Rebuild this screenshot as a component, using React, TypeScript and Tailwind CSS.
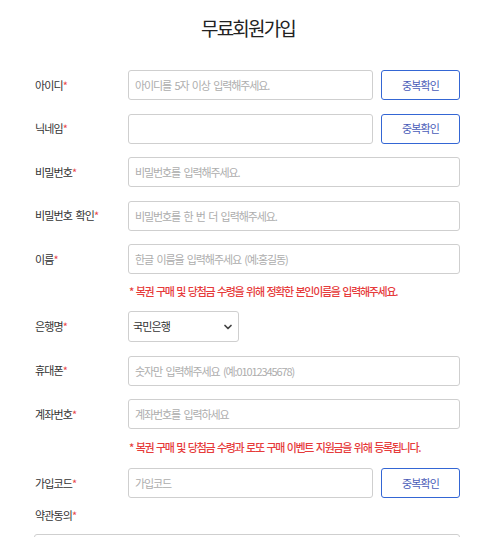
import { ChevronDown } from "lucide-react";

const FONT = "font-['Noto_Sans_CJK_KR','Noto_Sans',sans-serif]";

function Label({ text }: { text: string }) {
  return (
    <label className="w-[93px] shrink-0 text-[11px] tracking-[-0.9px] text-[#333] [word-spacing:2px]">
      {text}
      <span className="text-[#e8474a]">*</span>
    </label>
  );
}

function TextInput({ placeholder }: { placeholder?: string }) {
  return (
    <input
      className="h-[30px] min-w-0 flex-1 rounded-[3px] border border-[#cfcfcf] bg-white px-[6px] text-[11px] tracking-[-1.1px] text-[#333] outline-none [word-spacing:2px] placeholder:text-[#adadad]"
      placeholder={placeholder}
    />
  );
}

function CheckButton() {
  return (
    <button className="ml-[8px] h-[30px] w-[79px] shrink-0 rounded-[3px] border border-[#3466d4] bg-white text-[11px] tracking-[-0.9px] text-[#4a5cb8]">
      중복확인
    </button>
  );
}

function Row(props: { label: string; placeholder?: string; check?: boolean }) {
  return (
    <div className="flex h-[30px] items-center">
      <Label text={props.label} />
      <TextInput placeholder={props.placeholder} />
      {props.check && <CheckButton />}
    </div>
  );
}

function Note({ text, className }: { text: string; className: string }) {
  return (
    <p
      className={`pl-[94px] text-[11px] font-medium tracking-[-1.3px] text-[#e63b3b] [word-spacing:1.5px] ${className}`}
    >
      {text}
    </p>
  );
}

export default function App() {
  return (
    <div className={`h-[537px] w-[496px] overflow-hidden bg-white ${FONT}`}>
      <h1 className="pt-[15px] text-center text-[19px] leading-[26px] tracking-[-1.8px] text-[#222]">
        무료회원가입
      </h1>

      <div className="mt-[29px] flex flex-col gap-[13.5px] pl-[35px] pr-[36px]">
        <Row label="아이디" placeholder="아이디를 5자 이상 입력해주세요." check />
        <Row label="닉네임" check />
        <Row label="비밀번호" placeholder="비밀번호를 입력해주세요." />
        <Row label="비밀번호 확인" placeholder="비밀번호를 한 번 더 입력해주세요." />
        <Row label="이름" placeholder="한글 이름을 입력해주세요 (예:홍길동)" />
        <Note
          className="h-[10px] leading-[7px]"
          text="* 복권 구매 및 당첨금 수령을 위해 정확한 본인이름을 입력해주세요."
        />

        {/* Bank select */}
        <div className="flex h-[31px] items-center">
          <Label text="은행명" />
          <div className="relative h-[31px] w-[111px]">
            <select className="h-full w-full appearance-none rounded-[3px] border border-[#cfcfcf] bg-white pl-[4px] text-[11px] tracking-[-0.9px] text-[#333] outline-none">
              <option>국민은행</option>
            </select>
            <ChevronDown
              className="pointer-events-none absolute right-[5px] top-[10px] text-[#444]"
              size={12}
              strokeWidth={3.5}
            />
          </div>
        </div>

        <Row label="휴대폰" placeholder="숫자만 입력해주세요 (예:01012345678)" />
        <Row label="계좌번호" placeholder="계좌번호를 입력하세요" />
        <Note
          className="h-[12px] leading-[9px]"
          text="* 복권 구매 및 당첨금 수령과 로또 구매 이벤트 지원금을 위해 등록됩니다."
        />
        <Row label="가입코드" placeholder="가입코드" check />
      </div>

      <div className="pl-[35px] pr-[36px]">
        <div className="mt-[10px] h-[14px] text-[11px] leading-[14px] tracking-[-0.9px] text-[#333]">
          약관동의<span className="text-[#e8474a]">*</span>
        </div>
        <div className="mt-[12px] ml-[-1px] h-[120px] rounded-[3px] border border-[#cfcfcf]" />
      </div>
    </div>
  );
}
